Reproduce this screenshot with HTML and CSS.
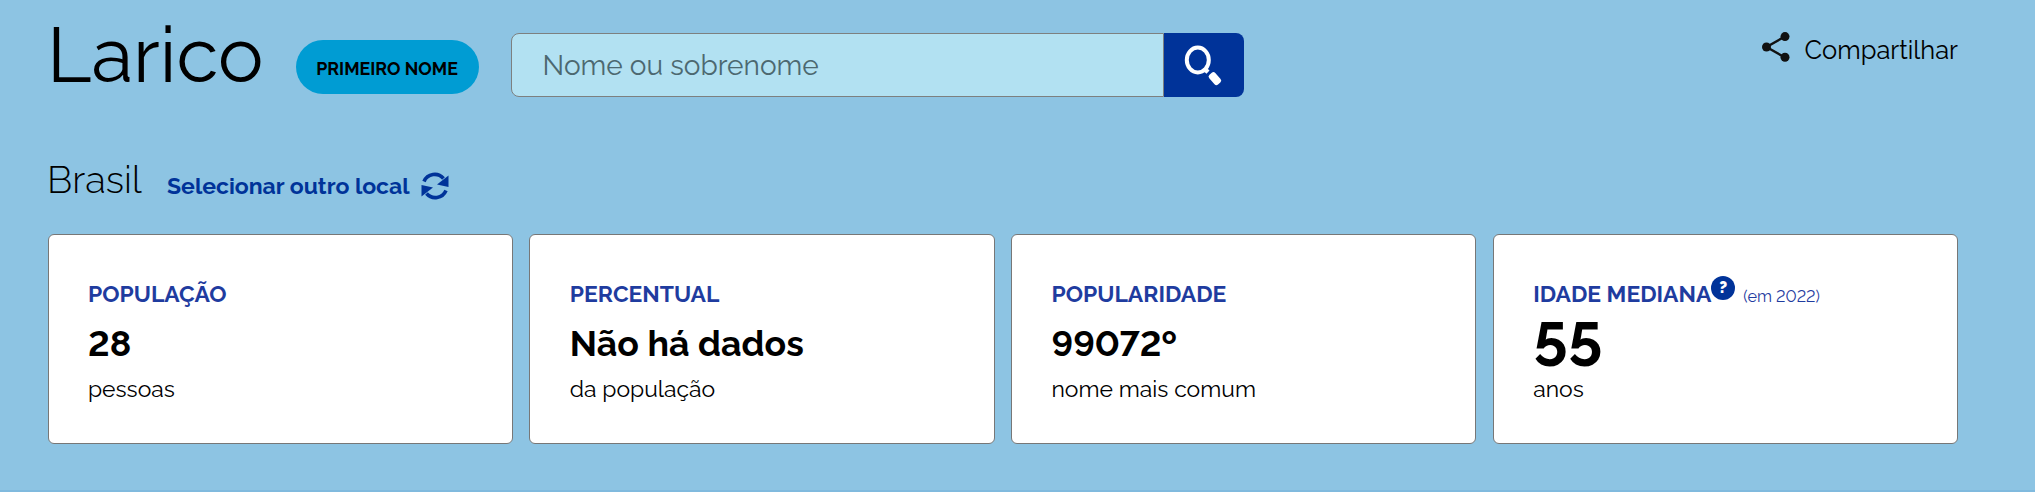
FILE: index.html
```html
<!DOCTYPE html>
<html lang="pt-BR">
<head>
    <meta charset="utf-8">
    <meta name="viewport" content="width=device-width, initial-scale=1.0">
    <title>Larico - Nomes</title>
    <link rel="stylesheet" href="styles.css">
</head>
<body>
    <div class="painel">
        <header class="topo">
            <h1 class="nome">Larico</h1>
            <span class="tipo">PRIMEIRO NOME</span>
            <form class="busca">
                <input type="text" class="busca-campo" placeholder="Nome ou sobrenome">
                <button type="button" class="busca-botao" aria-label="Buscar">
                    <svg width="40" height="44" viewBox="0 0 40 44" fill="none" stroke="#fff">
                        <ellipse cx="13.8" cy="17" rx="11" ry="12.4" stroke-width="4"/>
                        <path d="M20.5 26l3.5 3.2" stroke-width="4.5"/>
                        <rect x="-1.5" y="-2.5" width="10" height="5" rx="1" transform="translate(28.6 33) rotate(49)" fill="#fff" stroke-width="3" stroke-linejoin="round"/>
                    </svg>
                </button>
            </form>
            <a class="compartilhar">
                <svg width="28" height="30" viewBox="0 0 28 30">
                    <path d="M23 4.5L4.5 15L23 25.5" fill="none" stroke="#111" stroke-width="2.4"/>
                    <circle cx="4.5" cy="15" r="4.5" fill="#111"/>
                    <circle cx="23" cy="4.6" r="4.5" fill="#111"/>
                    <circle cx="23" cy="25.3" r="4.5" fill="#111"/>
                </svg>
                <span>Compartilhar</span>
            </a>
        </header>

        <div class="local">
            <h2 class="local-nome">Brasil</h2>
            <a class="local-link">
                <span>Selecionar outro local</span>
                <svg width="28" height="28" viewBox="0 0 28 28">
                    <path d="M3 9.5A11.6 11.6 0 0 1 22.5 6.5M25 18.5A11.6 11.6 0 0 1 5.5 21.5" fill="none" stroke="#039" stroke-width="3.6"/>
                    <path d="M27.5 3.5V15L16 12.5Z" fill="#039"/>
                    <path d="M.5 24.5V13L12 15.5Z" fill="#039"/>
                </svg>
            </a>
        </div>

        <div class="cards">
            <div class="card">
                <div class="rotulo">POPULAÇÃO</div>
                <div class="valor">28</div>
                <div class="unidade">pessoas</div>
            </div>
            <div class="card">
                <div class="rotulo">PERCENTUAL</div>
                <div class="valor">Não há dados</div>
                <div class="unidade">da população</div>
            </div>
            <div class="card">
                <div class="rotulo">POPULARIDADE</div>
                <div class="valor">99072º</div>
                <div class="unidade">nome mais comum</div>
            </div>
            <div class="card idade">
                <div class="rotulo">IDADE MEDIANA<span class="ajuda">?</span><small class="ano">(em 2022)</small></div>
                <div class="valor">55</div>
                <div class="unidade">anos</div>
            </div>
        </div>
    </div>
</body>
</html>
```
FILE: styles.css
```css
* {
    box-sizing: border-box;
}
body {
    margin: 0;
    background-color: #fff;
    color: #000;
    font-family: Raleway, Lato, sans-serif;
    font-variant-numeric: lining-nums;
}
svg {
    display: block;
    flex: none;
}
.painel {
    height: 492px;
    padding: 20px 77px 0 47.5px;
    background-color: #8dc4e3;
    border-bottom: 2px solid #80bade;
}

/* topo */
.topo {
    display: flex;
    align-items: flex-start;
    height: 77px;
}
.nome {
    width: 248.5px;
    margin: 3px 0 0 -.5px;
    font-size: 76.3px;
    font-weight: 400;
    line-height: 64px;
}
.tipo {
    width: 183px;
    height: 54px;
    margin-top: 20px;
    padding-top: 3px;
    border-radius: 27px;
    background-color: #009cd3;
    font-size: 17.8px;
    font-weight: 700;
    line-height: 52px;
    text-align: center;
}
.busca {
    display: flex;
    width: 733px;
    height: 64px;
    margin: 13px 0 0 32px;
}
.busca-campo {
    flex: 1;
    min-width: 0;
    padding: 1px 0 0 31px;
    border: 1px solid #7d8080;
    border-radius: 8px 0 0 8px;
    background-color: #b2e1f2;
    font-family: inherit;
    font-size: 28px;
}
.busca-campo::placeholder {
    color: #4c6870;
}
.busca-botao {
    display: flex;
    align-items: center;
    width: 80px;
    padding: 0 0 0 20px;
    border: 0;
    border-radius: 0 8px 8px 0;
    background-color: #039;
}
.compartilhar {
    display: flex;
    gap: 15px;
    margin: 12px 0 0 auto;
    font-size: 25.5px;
    line-height: 36px;
}

/* local */
.local {
    display: flex;
    align-items: flex-start;
    height: 80px;
    margin: 57px 0 0 -.5px;
}
.local-nome {
    width: 120px;
    margin: 0;
    font-size: 38.2px;
    font-weight: 300;
    line-height: 51px;
}
.local-link {
    display: flex;
    gap: 11px;
    margin-top: 17px;
    color: #039;
    font-size: 23px;
    font-weight: 700;
    line-height: 30px;
}
.local-link svg {
    margin-top: 1px;
}

/* cards */
.cards {
    display: grid;
    grid-template-columns: repeat(4, 1fr);
    gap: 16.5px;
}
.card {
    height: 210px;
    padding: 44px 39.5px 0;
    border: 1px solid #777;
    border-radius: 6px;
    background-color: #fff;
}
.rotulo {
    display: flex;
    height: 30px;
    color: #1f3c9f;
    font-size: 22.9px;
    font-weight: 700;
    line-height: 30px;
}
.valor {
    height: 66px;
    font-size: 35.7px;
    font-weight: 700;
    line-height: 68px;
}
.unidade {
    font-size: 22.9px;
    line-height: 28px;
}
.idade .valor {
    font-size: 61px;
    line-height: 71px;
}
.ajuda {
    width: 24px;
    height: 24px;
    margin: -3px 8px 0 0;
    border-radius: 50%;
    background-color: #039;
    color: #fff;
    font-size: 16px;
    font-weight: 900;
    line-height: 24px;
    text-align: center;
}
.ano {
    padding-top: 3px;
    font-size: 16.3px;
    font-weight: 400;
    line-height: 30px;
}
```
